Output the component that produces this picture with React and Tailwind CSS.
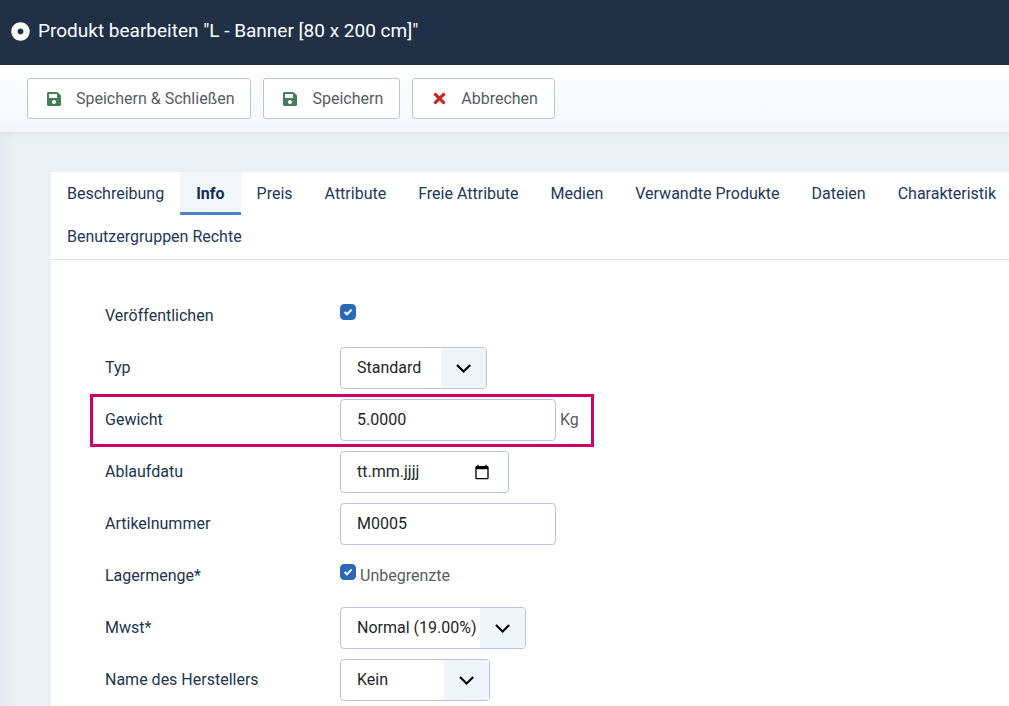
import { useState } from "react";
import { FaDotCircle, FaSave, FaTimes } from "react-icons/fa";
import { MdCalendarToday } from "react-icons/md";

const tabs = [
  "Beschreibung",
  "Info",
  "Preis",
  "Attribute",
  "Freie Attribute",
  "Medien",
  "Verwandte Produkte",
  "Dateien",
  "Charakteristik",
  "Benutzergruppen Rechte",
];

const fieldClass = "h-[42px] rounded border border-[#b5c5de] bg-white px-4 text-[#22262a]";
const inputClass = `${fieldClass} pb-[2px] placeholder:text-[#22262a] placeholder:opacity-100`;

function ToolbarButton({ icon, children }) {
  return (
    <button
      type="button"
      className="flex h-[41px] items-center rounded-[3px] border border-[#bdc6d3] bg-white px-4 text-[#565c63]"
    >
      <span className="mr-3 flex w-5 justify-center">{icon}</span>
      {children}
    </button>
  );
}

function Row({ label, id, highlight, children }) {
  return (
    <div className="relative flex h-[52px] w-fit items-center">
      <label htmlFor={id} className="w-[235px] text-[#20344f]">
        {label}
      </label>
      <div className="flex items-center gap-1 text-[#565c63]">{children}</div>
      {highlight && (
        <div className="pointer-events-none absolute -inset-x-[15px] top-0 -bottom-px border-3 border-[#cc0066]" />
      )}
    </div>
  );
}

function Checkbox({ id, checked, onChange }) {
  return (
    <span className="relative mb-2 flex size-4">
      <input
        id={id}
        type="checkbox"
        checked={checked}
        onChange={(e) => onChange(e.target.checked)}
        className="size-4 appearance-none rounded border border-[#2a69b8] bg-white checked:bg-[#2a69b8]"
      />
      {checked && (
        <svg
          viewBox="0 0 16 16"
          className="pointer-events-none absolute inset-0 size-4"
          fill="none"
          stroke="white"
          strokeWidth="2"
        >
          <path d="M4.6 8 7 10.3 11.6 5.6" />
        </svg>
      )}
    </span>
  );
}

function Select({ id, options, className }) {
  return (
    <div className={`relative ${className}`}>
      <select id={id} className={`${fieldClass} w-full appearance-none`}>
        {options.map((o) => (
          <option key={o}>{o}</option>
        ))}
      </select>
      {/* Arrow field */}
      <span className="pointer-events-none absolute inset-y-px right-px flex w-[45px] items-center justify-center rounded-r-[3px] bg-[#f0f4fb]">
        <svg viewBox="0 0 16 16" className="size-4" fill="none" stroke="black" strokeWidth="2.1">
          <path d="M1 5 7.6 11.6 14.2 5" />
        </svg>
      </span>
    </div>
  );
}

export default function App() {
  const [active, setActive] = useState("Info");
  const [published, setPublished] = useState(true);
  const [unlimited, setUnlimited] = useState(true);
  const [weight, setWeight] = useState("5.0000");
  const [sku, setSku] = useState("M0005");
  const [date, setDate] = useState("");

  return (
    <div className="min-h-screen overflow-hidden bg-[#ebf0f4] font-['Roboto',sans-serif] text-base">
      <header className="relative z-10 flex h-[65px] items-center gap-2 bg-[#203047] px-[11px] pb-[3px] text-white">
        <FaDotCircle size={19} />
        <h1 className="text-[19px] leading-6">Produkt bearbeiten "L - Banner [80 x 200 cm]"</h1>
      </header>

      <div className="bg-linear-to-r from-[#e3eaf5] to-transparent to-[14px]">
        {/* Toolbar */}
        <div className="relative flex gap-3 bg-linear-to-b from-white to-[#f4f6fb] px-[27px] py-[13px] shadow-[0_1px_6px_#d3deea]">
          <ToolbarButton icon={<FaSave size={16} className="text-[#457d54]" />}>
            Speichern &amp; Schließen
          </ToolbarButton>
          <ToolbarButton icon={<FaSave size={16} className="text-[#457d54]" />}>
            Speichern
          </ToolbarButton>
          <ToolbarButton icon={<FaTimes size={17} className="text-[#c52827]" />}>
            Abbrechen
          </ToolbarButton>
        </div>

        <main className="mt-10 ml-[51px] bg-white">
          {/* Tabs */}
          <div className="border-b border-[#dce4ec] pb-px">
            <div role="tablist" className="-mr-4 flex flex-wrap">
              {tabs.map((tab) => (
                <button
                  key={tab}
                  type="button"
                  role="tab"
                  aria-selected={tab === active}
                  onClick={() => setActive(tab)}
                  className={`h-[43px] px-4 ${
                    tab === active
                      ? "bg-[#f2f6f9] font-bold text-[#132f53] shadow-[inset_0_-3px_0_#5082c7]"
                      : "text-[#20385c]"
                  }`}
                >
                  {tab}
                </button>
              ))}
            </div>
          </div>

          {/* Product form */}
          <form className="pt-[30px] pl-[54px]">
            <Row label="Veröffentlichen" id="published">
              <Checkbox id="published" checked={published} onChange={setPublished} />
            </Row>
            <Row label="Typ" id="type">
              <Select id="type" options={["Standard"]} className="w-[147px]" />
            </Row>
            <Row label="Gewicht" id="weight" highlight>
              <input
                id="weight"
                type="text"
                value={weight}
                onChange={(e) => setWeight(e.target.value)}
                className={`${inputClass} w-[216px]`}
              />
              <span>Kg</span>
            </Row>
            <Row label="Ablaufdatu" id="date">
              <div className="relative">
                <input
                  id="date"
                  type="text"
                  placeholder="tt.mm.jjjj"
                  value={date}
                  onChange={(e) => setDate(e.target.value)}
                  className={`${inputClass} w-[169px]`}
                />
                <MdCalendarToday
                  size={16}
                  className="pointer-events-none absolute top-[13px] right-[19px] text-black"
                />
              </div>
            </Row>
            <Row label="Artikelnummer" id="sku">
              <input
                id="sku"
                type="text"
                value={sku}
                onChange={(e) => setSku(e.target.value)}
                className={`${inputClass} w-[216px]`}
              />
            </Row>
            <Row label="Lagermenge*" id="unlimited">
              <Checkbox id="unlimited" checked={unlimited} onChange={setUnlimited} />
              <label htmlFor="unlimited">Unbegrenzte</label>
            </Row>
            <Row label="Mwst*" id="tax">
              <Select id="tax" options={["Normal (19.00%)"]} className="w-[186px]" />
            </Row>
            <Row label="Name des Herstellers" id="manufacturer">
              <Select id="manufacturer" options={["Kein"]} className="w-[150px]" />
            </Row>
          </form>
        </main>
      </div>
    </div>
  );
}
